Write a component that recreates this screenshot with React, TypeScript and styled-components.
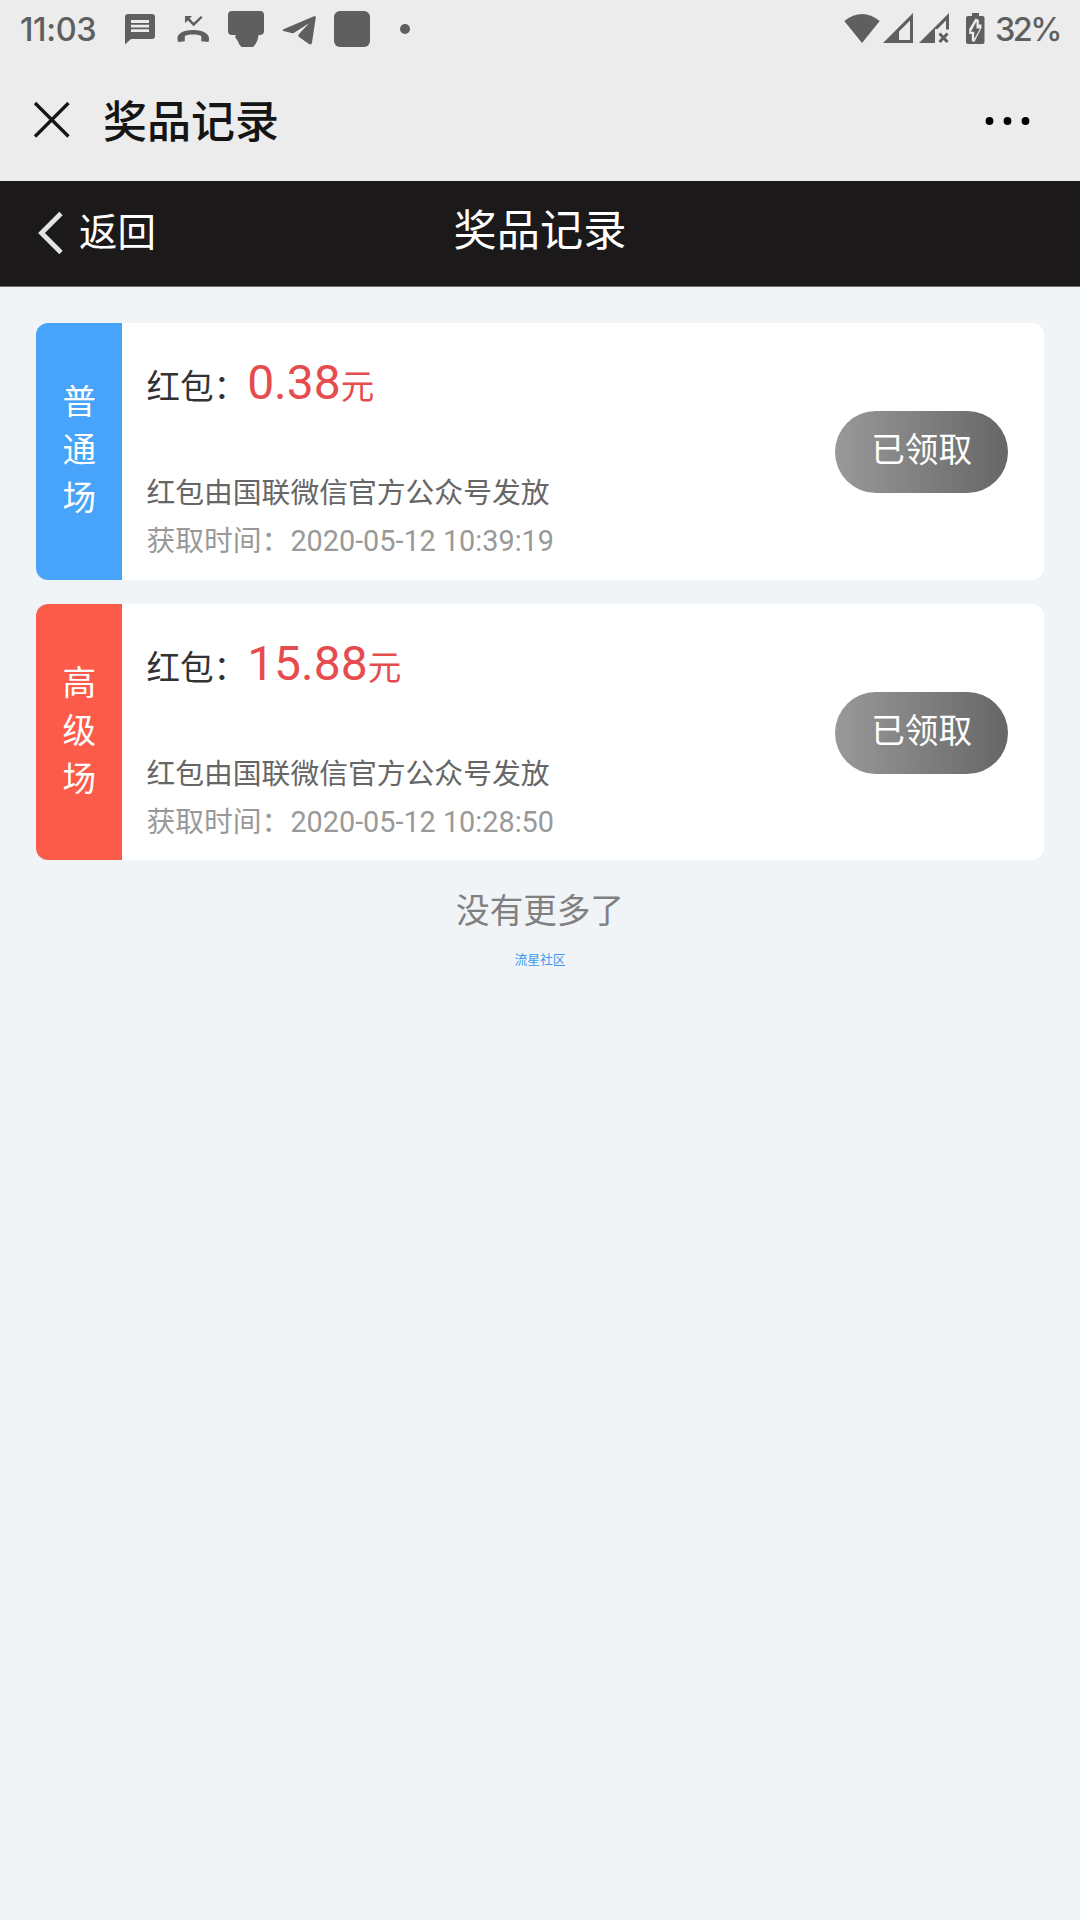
import React from 'react';
import styled, { createGlobalStyle } from 'styled-components';

const GlobalStyle = createGlobalStyle`
  * { box-sizing: border-box; }
  body {
    margin: 0;
    background: #f0f4f7;
    font-family: Roboto, 'Noto Sans CJK SC', sans-serif;
  }
`;

const Screen = styled.div`
  width: 1080px;
  height: 1920px;
  overflow: hidden;
  background: #f0f4f7;
`;

const StatusBar = styled.div`
  display: flex;
  align-items: center;
  height: 58px;
  padding: 0 20px;
  background: #ececec;
  color: #5f5f5f;
`;

const StatusText = styled.span<{ $width: number; $tracking: number }>`
  width: ${(p) => p.$width}px;
  font-family: Inter, Roboto, sans-serif;
  font-size: 32.5px;
  font-weight: 450;
  line-height: 56px;
  padding-top: 2px;
  letter-spacing: ${(p) => p.$tracking}px;
  white-space: nowrap;
`;

const NotificationIcons = styled.div`
  display: flex;
  gap: 17px;
  margin-left: 20px;
  margin-right: auto;
`;

const SystemIcons = styled.div`
  display: flex;
  margin-right: 10px;
`;

const Glyph = styled.svg`
  display: block;
  flex: none;
`;

const AppBar = styled.header`
  display: flex;
  align-items: center;
  height: 123px;
  padding: 0 48px 0 33px;
  background: #ececec;
`;

const AppTitle = styled.h1`
  flex: 1;
  margin: 0 0 0 32px;
  padding-top: 6px;
  color: #151515;
  font-size: 44px;
  font-weight: 500;
  line-height: 60px;
`;

const NavBar = styled.nav`
  display: grid;
  grid-template-columns: 1fr auto 1fr;
  height: 106px;
  padding: 0 36px;
  background: #1b191a;
  border-bottom: 1px solid #6e6f70;
  color: #fff;
`;

const Back = styled.div`
  display: flex;
  align-items: center;
  gap: 15px;
  padding-bottom: 2px;
  font-size: 38.4px;
  line-height: 99px;
`;

const NavTitle = styled.div`
  font-size: 43.2px;
  line-height: 102px;
`;

const List = styled.main`
  display: flex;
  flex-direction: column;
  gap: 24px;
  padding: 36px 36px 0;
`;

const Card = styled.article`
  display: flex;
  align-items: center;
  height: 256.5px;
  padding-right: 36px;
  overflow: hidden;
  border-radius: 12px;
  background: #fff;
`;

const Level = styled.div<{ $color: string }>`
  display: flex;
  flex-direction: column;
  align-items: center;
  align-self: stretch;
  justify-content: center;
  width: 86.4px;
  background: ${(p) => p.$color};
  color: #fff;
  font-size: 33.6px;
  line-height: 48px;
`;

const Details = styled.div`
  display: flex;
  flex: 1;
  flex-direction: column;
  align-self: stretch;
  padding: 28px 0 0 24px;
`;

const Prize = styled.div`
  height: 118px;
  color: #333;
  font-size: 33.6px;
  line-height: 64px;
`;

const Amount = styled.span`
  color: #e64c4e;
`;

const Figure = styled.span`
  font-size: 48px;
`;

const Line = styled.div<{ $color: string }>`
  color: ${(p) => p.$color};
  font-size: 28.8px;
  line-height: 48px;
`;

const Claimed = styled.div`
  width: 172.8px;
  height: 81.6px;
  margin-top: 2px;
  border-radius: 41px;
  background: linear-gradient(90deg, #999, #666);
  color: #fff;
  font-size: 33.6px;
  line-height: 80px;
  text-align: center;
`;

const EndNote = styled.p`
  margin: 24px 0 0;
  color: #808080;
  font-size: 33.6px;
  line-height: 56px;
  text-align: center;
`;

const Community = styled.p`
  margin: 11px 0 0;
  color: #429af0;
  font-size: 12.8px;
  line-height: 18px;
  text-align: center;
`;

const records = [
  { level: '普通场', color: '#48a3fb', amount: '0.38', time: '2020-05-12 10:39:19' },
  { level: '高级场', color: '#fd5b4a', amount: '15.88', time: '2020-05-12 10:28:50' },
];

const Notifications = () => (
  <NotificationIcons>
    <Glyph width="36" height="36" viewBox="0 0 36 36" fill="currentColor">
      <path fillRule="evenodd" d="M6 3h24a3 3 0 0 1 3 3v19a3 3 0 0 1-3 3H9l-6 5.500V6a3 3 0 0 1 3-3zM9 9v3h18V9zM9 13.700v2.800h18v-2.800zM9 18.300v2.800h18v-2.800z" />
    </Glyph>
    <Glyph width="36" height="36" viewBox="0 0 36 36" fill="currentColor">
      <path d="M2.500 28c-.5-5 5-9 15.500-9s16.500 4 16 9l-.4 3-7.300-.8v-5.300c-5-1.800-11.500-1.800-16.500 0v5.300L3 31z" />
      <path d="M10 5h7l-2.300 2.600 4 4.200 7.200-6.900 1.700 1.700-8.900 8.700-5.800-5.800L10 12z" />
    </Glyph>
    <Glyph width="36" height="36" viewBox="0 0 36 36" fill="currentColor">
      <path d="M4 0h28a4 4 0 0 1 4 4v16q0 4-4 4h-1.500q-.6 7.500-5.500 12H13.500q-3-3-4-6.500L7 26l1-2H4q-4 0-4-4V4a4 4 0 0 1 4-4z" />
    </Glyph>
    <Glyph width="36" height="36" viewBox="0 0 36 36" fill="currentColor">
      <path d="M3 18 33 5.200Q35 4.500 34.700 7L31 31.500q-.5 3-3 1.600l-10-7q-1.600-1.300-.2-2.800L28 12.200 13.500 21.500q-1.500 1-3 .5l-8-2q-2-.8.5-2z" />
    </Glyph>
    <Glyph width="36" height="36" viewBox="0 0 36 36" fill="currentColor">
      <rect width="36" height="36" rx="6" />
    </Glyph>
    <Glyph width="36" height="36" viewBox="0 0 36 36" fill="currentColor">
      <circle cx="18" cy="18" r="5" />
    </Glyph>
  </NotificationIcons>
);

const System = () => (
  <SystemIcons>
    <Glyph width="39" height="32" viewBox="0 0 39 32" fill="currentColor">
      <path d="M.3 8Q18 -6 35.700 8L18 30z" />
    </Glyph>
    <Glyph width="36" height="32" viewBox="0 0 36 32" fill="currentColor">
      <path fillRule="evenodd" d="M30 0v30H0zM27 7.500 16 18.500V27h11z" />
    </Glyph>
    <Glyph width="47" height="32" viewBox="0 0 47 32" fill="currentColor">
      <path d="M30 0v16.500h-3v-9l-8.500 8.500H16v14H0z" />
      <path d="m20.500 20.500 8 8.500m0-8.500-8 8.500" fill="none" stroke="currentColor" strokeWidth="3" />
    </Glyph>
    <Glyph width="19" height="32" viewBox="0 0 19 32" fill="currentColor">
      <path fillRule="evenodd" d="M6 0h7v3h3.500a2 2 0 0 1 2 2v24a2 2 0 0 1-2 2H2a2 2 0 0 1-2-2V5a2 2 0 0 1 2-2h4zM9.500 5.500 3.200 16v5h2.600v7l2.500 1 7.200-14v-3.500h-2.700V7z" />
      <path d="M10.500 8.500 4.800 18.800h3.400V26l5.900-10.600h-3.600z" />
    </Glyph>
  </SystemIcons>
);

export default function App() {
  return (
    <>
      <GlobalStyle />
      <Screen>
        <StatusBar>
          <StatusText $width={82} $tracking={-0.4}>11:03</StatusText>
          <Notifications />
          <System />
          <StatusText $width={65} $tracking={-2.6}>32%</StatusText>
        </StatusBar>
        <AppBar>
          <Glyph width="38" height="38" viewBox="0 0 38 38" fill="none" stroke="#151515" strokeWidth="3.300">
            <path d="m2 2 33.500 33.500M35.500 2 2 35.500" />
          </Glyph>
          <AppTitle>奖品记录</AppTitle>
          <Glyph width="48" height="10" viewBox="0 0 48 10" fill="#000">
            <circle cx="5.500" cy="6" r="3.900" />
            <circle cx="23.500" cy="6" r="3.900" />
            <circle cx="41.500" cy="6" r="3.900" />
          </Glyph>
        </AppBar>
        <NavBar>
          <Back>
            <Glyph width="28" height="44" viewBox="0 0 28 44" fill="none" stroke="#e4e4e4" strokeWidth="4.800">
              <path d="M25 2.500 5.500 22 25 41.500" />
            </Glyph>
            返回
          </Back>
          <NavTitle>奖品记录</NavTitle>
        </NavBar>
        <List>
          {records.map((r) => (
            <Card key={r.time}>
              <Level $color={r.color}>
                {r.level.split('').map((c, i) => (
                  <span key={i}>{c}</span>
                ))}
              </Level>
              <Details>
                <Prize>
                  红包：<Amount><Figure>{r.amount}</Figure>元</Amount>
                </Prize>
                <Line $color="#666">红包由国联微信官方公众号发放</Line>
                <Line $color="#999">获取时间：{r.time}</Line>
              </Details>
              <Claimed>已领取</Claimed>
            </Card>
          ))}
        </List>
        <EndNote>没有更多了</EndNote>
        <Community>流星社区</Community>
      </Screen>
    </>
  );
}
